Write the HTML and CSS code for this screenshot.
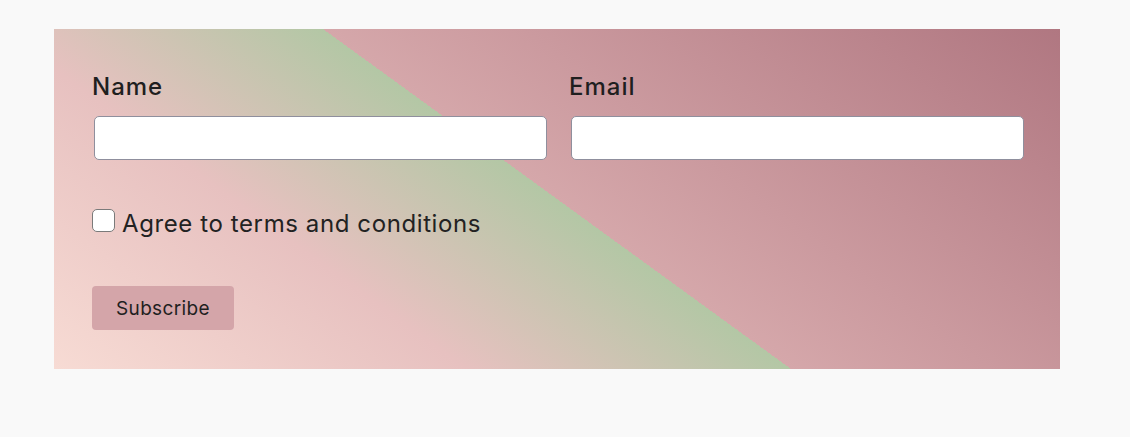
FILE: index.html
```html
<!DOCTYPE html>
<html lang="en">
<head>
<meta charset="utf-8">
<title>Subscribe</title>
<link rel="stylesheet" href="styles.css">
</head>
<body>
<form class="card">
  <div class="fields">
    <div class="field">
      <label class="label" for="name">Name</label>
      <input class="input" id="name" type="text">
    </div>
    <div class="field">
      <label class="label" for="email">Email</label>
      <input class="input" id="email" type="email">
    </div>
  </div>
  <label class="agree">
    <input class="check" type="checkbox">
    <span>Agree to terms and conditions</span>
  </label>
  <button class="btn" type="button">Subscribe</button>
</form>
</body>
</html>
```

FILE: styles.css
```css
html, body {
  margin: 0;
  background: #f9f9f9;
}
body {
  padding: 29px 70px 0 54px;
  font-family: Inter, "Noto Sans", sans-serif;
  color: #1f1f1f;
}
.card {
  display: flex;
  flex-direction: column;
  align-items: flex-start;
  height: 340px;
  box-sizing: border-box;
  padding: 38px;
  background: linear-gradient(36deg, #f7dbd4 0%, #e7c1c0 28%, #b3c7a5 50%, #d5a7aa 50%, #b07781 100%);
}
.fields {
  display: grid;
  grid-template-columns: 1fr 1fr;
  column-gap: 24px;
  width: 100%;
}
.label {
  display: block;
  padding-top: 2px;
  font-size: 24px;
  font-weight: 500;
  line-height: 36px;
  letter-spacing: 1px;
  margin-bottom: 11px;
}
.input {
  display: block;
  width: 100%;
  height: 44px;
  margin: 0 0 0 2px;
  box-sizing: border-box;
  border: 1px solid #8f8f9d;
  border-radius: 5px;
  background: #fff;
}
.agree {
  display: flex;
  align-items: flex-start;
  gap: 7px;
  margin-top: 46px;
  font-size: 24px;
  line-height: 36px;
  font-weight: 400;
  letter-spacing: 0.6px;
  color: #222;
}
.check {
  appearance: none;
  -webkit-appearance: none;
  width: 23px;
  height: 23px;
  margin: 3px 0 0 0;
  box-sizing: border-box;
  border: 1px solid #7a7a7a;
  border-radius: 5px;
  background: #fff;
}
.btn {
  margin-top: 44px;
  height: 44px;
  padding: 0 24px;
  border: none;
  border-radius: 4px;
  background: #d4a5a9;
  color: #1f1f1f;
  font-family: Inter, "Noto Sans", sans-serif;
  font-size: 19px;
  letter-spacing: 0.35px;
}
```
